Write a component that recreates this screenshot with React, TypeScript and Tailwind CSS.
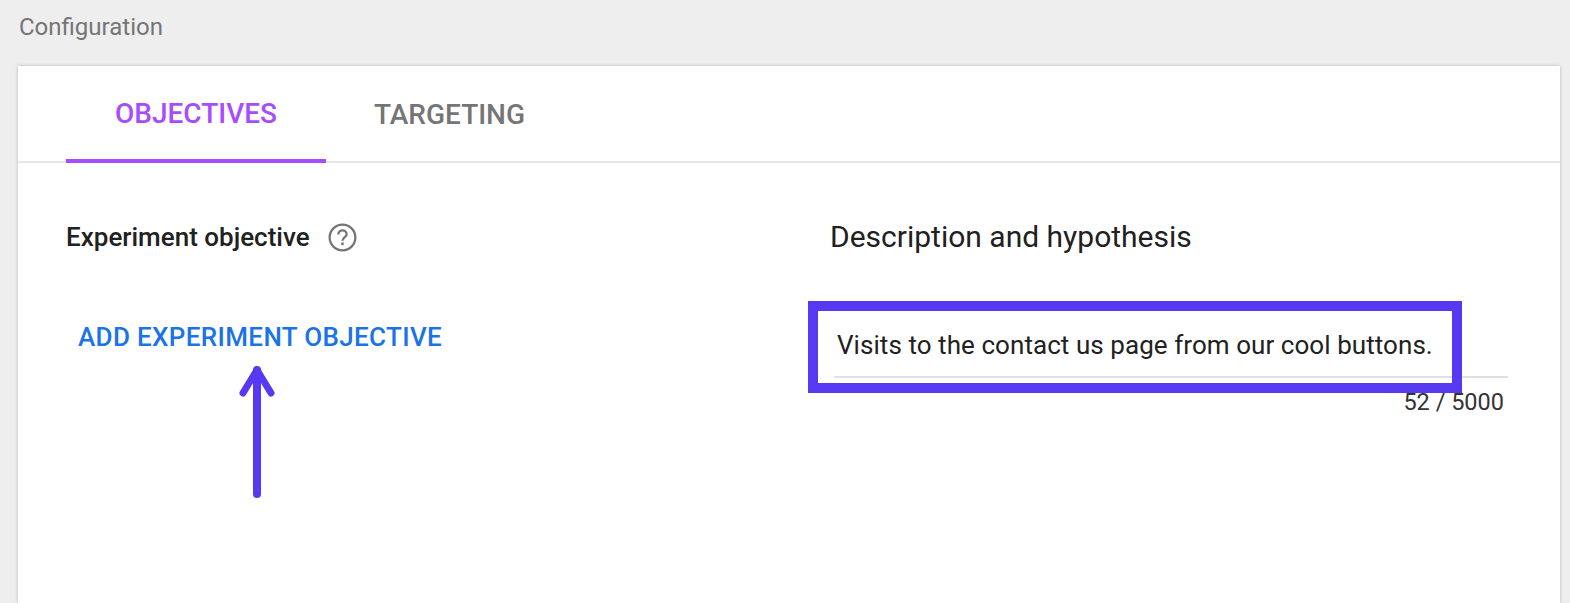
export default function App() {
  return (
    <div className="relative h-[603px] w-[1570px] overflow-hidden bg-[#eeeeee] font-['Roboto',sans-serif]">
      <div className="flex h-[66px] items-start pl-[19px] pt-[13px] text-[24px] leading-[28px] text-[#757575]">Configuration</div>
      <div className="ml-[18px] mr-[10px] h-[537px] bg-white shadow-[0_0_3px_rgba(0,0,0,0.25)]">
        <div className="flex h-[97px] border-b-2 border-[#e6e6e6] pl-[48px]">
          <div className="flex h-[97px] w-[260px] items-center justify-center border-b-4 border-[#a64dff] pt-[2px] text-[28px] font-medium text-[#a64dff]">OBJECTIVES</div>
          <div className="flex h-[97px] items-center px-[48px] text-[28px] font-medium text-[#757575]">TARGETING</div>
        </div>
        <div className="flex pl-[48px] pt-[54px]">
          <div className="w-[764px]">
            <div className="flex h-[40px] items-center gap-[18px] text-[26px] font-medium leading-[40px] text-[#212121]">
              Experiment objective
              <svg width="29" height="29" viewBox="0 0 28 28" fill="none">
                <circle cx="14" cy="14" r="12.4" stroke="#757575" strokeWidth="2.2" />
                <path d="M10 11.2c0-2.4 1.8-4 4-4s4 1.6 4 3.6c0 2.8-4 3-4 6.4" stroke="#757575" strokeWidth="2.2" fill="none" />
                <rect x="12.8" y="18.8" width="2.4" height="2.6" fill="#757575" />
              </svg>
            </div>
            <div className="pl-[12px] pt-[60px] text-[26px] font-medium leading-[40px] tracking-[0.35px] text-[#1a73e8]">ADD EXPERIMENT OBJECTIVE</div>
          </div>
          <div className="w-[678px]">
            <div className="h-[40px] text-[30px] leading-[40px] text-[#212121]">Description and hypothesis</div>
            <div className="ml-[4px] mt-[54px] flex h-[67px] items-center border-b-2 border-[#e0e0e0] pl-[3px] pt-[4px] text-[26px] tracking-[0.06px] text-[#212121]">Visits to the contact us page from our cool buttons.</div>
            <div className="pr-[4px] pt-[8px] text-right text-[23.5px] leading-[32px] text-[#333333]">52 / 5000</div>
          </div>
        </div>
      </div>
      <div className="absolute left-[808px] top-[301px] h-[92px] w-[654px] border-[10px] border-[#5639f0]" />
      <svg className="absolute left-[236px] top-[362px]" width="44" height="140" viewBox="0 0 44 140" fill="none">
        <path d="M21 132V8" stroke="#5639f0" strokeWidth="8" strokeLinecap="round" />
        <path d="M7 31L21 8L35 31" stroke="#5639f0" strokeWidth="7" strokeLinecap="round" strokeLinejoin="round" />
      </svg>
    </div>
  );
}
